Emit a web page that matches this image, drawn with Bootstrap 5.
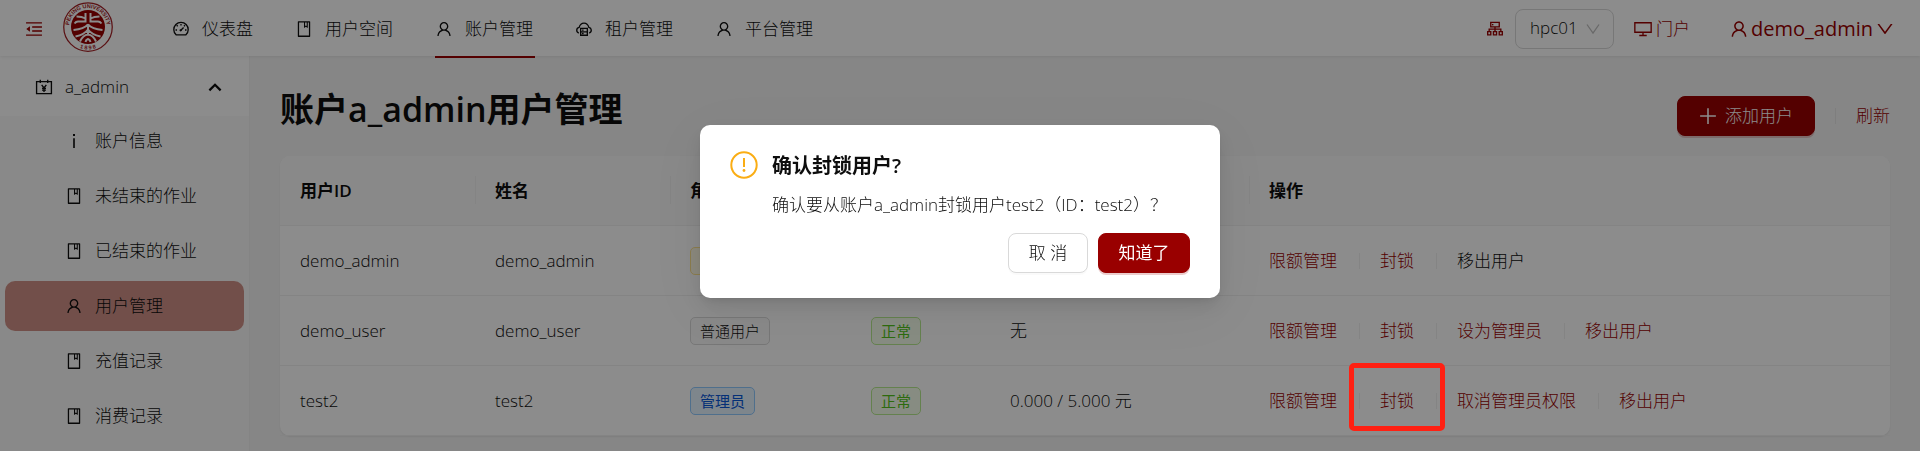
<!DOCTYPE html>
<html lang="zh-CN">
<head>
<meta charset="utf-8">
<meta name="viewport" content="width=device-width, initial-scale=1">
<title>用户管理</title>
<link href="https://cdn.jsdelivr.net/npm/bootstrap@5.3.0/dist/css/bootstrap.min.css" rel="stylesheet">
<style>
  :root { --brand: #990000; --ink: #0d0d0d; --line: #f0f0f0; }
  body { font-family: "Open Sans", "Noto Sans CJK SC", sans-serif; font-size: 17px; font-weight: 300; line-height: 28px; color: var(--ink); background: #f5f5f5; overflow: hidden; }
  a { color: var(--brand); text-decoration: none; }
  .ico { width: 18px; height: 18px; fill: currentColor; flex: none; }
  .ln { fill: none; stroke: currentColor; stroke-width: 76; }
  .topbar { height: 56px; padding-top: 1px; background: #fff; box-shadow: 0 1px 3px rgba(0,0,0,.08); position: relative; }
  .topmenu { gap: 40px; margin-left: 59px; }
  .topmenu a { color: var(--ink); gap: 12px; padding: 0 2px 0 0; height: 57px; border-bottom: 2px solid transparent; }
  .topmenu a.active { border-color: var(--brand); }
  .topmenu li { height: 55px; }
  .brandmark { width: 50px; height: 50px; margin: 0 0 4px 20px; }
  .fold { color: var(--brand); padding: 0; border: 0; background: none; line-height: 1; margin-left: 25px; }
  .cluster-select { width: 99px; height: 40px; border: 1px solid #d9d9d9; border-radius: 8px; padding: 0 0 2px 14px; font-size: 17px; font-weight: 300; color: var(--ink); margin: 0 20px 0 11px;
    background: #fff url("data:image/svg+xml,%3Csvg xmlns='http://www.w3.org/2000/svg' viewBox='0 0 16 16'%3E%3Cpath d='M2 3.5 8 12 14 3.5' fill='none' stroke='%23bfbfbf' stroke-width='1.3'/%3E%3C/svg%3E") no-repeat right 12px center / 16px 16px; appearance: none; }
  .account { font-size: 20px; font-weight: 400; gap: 2px; margin: 0 25px 0 39px; }
  .account .ico { width: 20px; height: 20px; }
  .sidebar { width: 250px; flex: none; background: #fafafa; border-right: 1px solid #f0f0f0; }
  .side-head { height: 60px; width: 100%; background: #fff; border: 0; color: var(--ink); font-weight: 300; padding: 1px 25px 0 35px; }
  .side-list { gap: 5px; margin: 0 5px; }
  .side-list a { height: 50px; color: var(--ink); border-radius: 10px; padding: 0 0 0 60px; gap: 12px; }
  .side-list a.active { background: #d09187; }
  .page { padding: 32px 30px 16px; min-width: 0; }
  h1 { font-size: 34px; line-height: 42px; font-weight: 600; }
  .btn { --bs-btn-font-size: 17px; --bs-btn-font-weight: 300; --bs-btn-border-radius: 8px; height: 40px; padding: 0; line-height: 28px; }
  .btn-brand { background: var(--brand); border-color: var(--brand); color: #fff; box-shadow: 0 2px 0 rgba(153,0,0,.2); }
  .btn-brand:hover { background: #b30000; color: #fff; }
  .btn-plain { background: #fff; border-color: #d9d9d9; color: var(--ink); box-shadow: 0 2px 0 rgba(0,0,0,.02); }
  .btn-cancel { width: 80px; }
  .btn-ok { width: 92px; font-weight: 400; }
  .btn-add { width: 138px; }
  .rule { width: 1px; height: 16px; background: rgba(0,0,0,.06); }
  .panel { background: #fff; border-radius: 10px; box-shadow: 0 1px 2px rgba(0,0,0,.08); margin-top: 20px; }
  .users { table-layout: fixed; --bs-table-bg: transparent; --bs-table-color: var(--ink); }
  .users th, .users td { border-color: var(--line); height: 70px; padding: 1px 20px 0; vertical-align: middle; white-space: nowrap; }
  .users th { height: 69px; font-weight: 600; background: #fafafa; }
  .users th + th { background: #fafafa linear-gradient(var(--line), var(--line)) no-repeat left center / 1px 28px; }
  .users th:first-child { border-top-left-radius: 10px; }
  .users th:last-child { border-top-right-radius: 10px; }
  .tag { display: inline-block; font-size: 15px; line-height: 26px; padding: 0 9px; border: 1px solid #d9d9d9; border-radius: 5px; background: #fafafa; vertical-align: middle; }
  .tag-gold { color: #d48806; background: #fffbe6; border-color: #ffe58f; }
  .tag-blue { color: #0958d9; background: #e6f4ff; border-color: #91caff; }
  .tag-green { color: #52c41a; background: #f6ffed; border-color: #b7eb8f; }
  .tag-blue, .tag-green { font-weight: 400; }
  .acts { gap: 20px; }
  td .acts a { margin-right: 2px; }
  .spot { position: absolute; inset: -24px -31px -16px; border: 5px solid #ff2012; border-radius: 5px; z-index: 1080; pointer-events: none; }
  .mask { background: rgba(0,0,0,.45); }
  .mask .modal-dialog { max-width: 520px; margin: 125px auto 0; }
  .mask .modal-content { border: 0; border-radius: 10px; padding: 26px 30px 25px; color: var(--ink); box-shadow: 0 8px 20px rgba(0,0,0,.1), 0 4px 8px -4px rgba(0,0,0,.12), 0 12px 60px 10px rgba(0,0,0,.05); }
  .mask h2 { font-size: 20px; line-height: 30px; font-weight: 600; margin: 0 0 10px; }
  .confirm-buttons { gap: 10px; margin-top: 14px; }
  .warn { width: 28px; height: 28px; color: #faad14; flex: none; margin-right: 14px; }
</style>
</head>
<body>
<svg class="d-none" aria-hidden="true">
  <symbol id="i-user" viewBox="0 0 1024 1024"><path d="M858.5 763.6a374 374 0 0 0-80.6-119.5 375.63 375.63 0 0 0-119.5-80.6c-.4-.2-.8-.3-1.2-.5C719.5 518 760 444.7 760 362c0-137-111-248-248-248S264 225 264 362c0 82.7 40.5 156 102.8 201.1-.4.2-.8.3-1.2.5-44.8 18.9-85 46-119.5 80.6a375.63 375.63 0 0 0-80.6 119.5A371.7 371.7 0 0 0 136 901.8a8 8 0 0 0 8 8.2h60c4.4 0 7.9-3.5 8-7.8 2-77.2 33-149.5 87.8-204.3 56.7-56.7 132-87.9 212.2-87.9s155.5 31.2 212.2 87.9C779 752.7 810 825 812 902.2c.1 4.4 3.6 7.8 8 7.8h60a8 8 0 0 0 8-8.2c-1-47.8-10.9-94.3-29.5-138.2zM512 534c-45.9 0-89.1-17.9-121.6-50.4S340 407.9 340 362c0-45.9 17.9-89.1 50.4-121.6S466.1 190 512 190s89.1 17.9 121.6 50.4S684 316.1 684 362c0 45.9-17.9 89.1-50.4 121.6S557.9 534 512 534z"/></symbol>
  <symbol id="i-book" viewBox="0 0 1024 1024"><path d="M832 64H192c-17.700 0-32 14.300-32 32v832c0 17.700 14.300 32 32 32h640c17.700 0 32-14.300 32-32V96c0-17.700-14.300-32-32-32zm-260 72h96v209.900L621.500 312 572 347.400V136zm220 752H232V136h280v296.900c0 3.300 1 6.600 3 9.300a15.900 15.900 0 0 0 22.300 3.700l83.800-59.900 81.400 59.400c2.700 2 6 3.100 9.400 3.100 8.800 0 16-7.200 16-16V136h64v752z"/></symbol>
  <symbol id="i-down" viewBox="0 0 1024 1024"><path d="M884 256h-75c-5.100 0-9.900 2.500-12.900 6.600L512 654.200 227.900 262.600c-3-4.100-7.800-6.600-12.900-6.600h-75c-6.500 0-10.300 7.400-6.500 12.700l352.600 486.100c12.800 17.600 39 17.600 51.700 0l352.600-486.100c3.900-5.300.1-12.700-6.400-12.700z"/></symbol>
  <symbol id="i-dash" viewBox="0 0 1024 1024"><path class="ln" d="M232 844A410 410 0 1 1 792 844Z" stroke-linejoin="round"/><path class="ln" d="M490 600 660 430"/><circle cx="492" cy="588" r="66"/><path class="ln" d="M512 225v85M265 300l60 60M740 300l-60 60M200 570h85M739 570h85"/></symbol>
  <symbol id="i-cloud" viewBox="0 0 1024 1024"><path class="ln" d="M215 740A165 165 0 0 1 235 420C285 250 390 180 512 180S739 250 789 420a165 165 0 0 1 20 320"/><path class="ln" d="M322 478h380v390H322ZM322 672h380"/><path class="ln" d="M400 575h90M400 770h90"/></symbol>
  <symbol id="i-fold" viewBox="0 0 1024 1024"><path d="M60 130h904v76H60ZM408 362h556v76H408ZM408 586h556v76H408ZM60 818h904v76H60ZM72 512 280 350v324Z"/></symbol>
  <symbol id="i-org" viewBox="0 0 1024 1024"><path class="ln" d="M270 138h484v250H270ZM512 388v240M180 640V520h664v120M96 660h176v190H96ZM424 660h176v190H424ZM752 660h176v190H752Z"/><path d="M340 225h80v80h-80z"/></symbol>
  <symbol id="i-screen" viewBox="0 0 1024 1024"><path class="ln" d="M48 158h928v540H48ZM512 698v170M300 880h424"/></symbol>
  <symbol id="i-bill" viewBox="0 0 1024 1024"><path class="ln" d="M90 210h844v680H90ZM300 100v190M724 100v190M380 390 512 570 644 390M512 560v230M400 590h224M400 690h224"/></symbol>
  <symbol id="i-info" viewBox="0 0 1024 1024"><path d="M466 350h92v560h-92ZM456 114h112v112H456Z"/></symbol>
  <symbol id="i-up" viewBox="0 0 16 16"><path d="M3 11 8 6l5 5" fill="none" stroke="currentColor" stroke-width="2"/></symbol>
  <symbol id="i-plus" viewBox="0 0 16 16"><path d="M8 1v14M1 8h14" fill="none" stroke="currentColor" stroke-width="1.400"/></symbol>
</svg>

<header class="topbar d-flex align-items-center">
  <button class="fold" type="button" aria-label="收起菜单"><svg class="ico"><use href="#i-fold"/></svg></button>
  <svg class="brandmark" viewBox="0 0 100 100" role="img" aria-label="Peking University">
    <defs><path id="arcTop" d="M16 67A38 38 0 1 1 84 67"/><path id="arcLow" d="M20 84A46 46 0 0 0 80 84"/></defs>
    <circle cx="50" cy="50" r="48.500" fill="#fff" stroke="#a52025" stroke-width="2.500"/>
    <circle cx="50" cy="50" r="34" fill="#990000"/>
    <g font-family="Liberation Sans" font-weight="700" font-size="11" fill="#a52025" text-anchor="middle">
      <text><textPath href="#arcTop" startOffset="50%">PEKING UNIVERSITY</textPath></text>
      <text><textPath href="#arcLow" startOffset="50%">1 8 9 8</textPath></text>
    </g>
    <g fill="none" stroke="#fff" stroke-width="4">
      <path d="M45 22V39H30Q26 39 23 43M27 29Q38 29 45 33M55 22V39H70Q74 39 77 43M73 29Q62 29 55 33"/>
      <path d="M50 44V66M50 45Q42 54 21 56M50 45Q58 54 79 56M50 55Q43 65 25 69M50 55Q57 65 75 69M34 79Q40 66 50 65Q60 66 66 79M45 80Q46 75 50 74Q54 75 55 80"/>
    </g>
  </svg>
  <nav aria-label="主导航">
    <ul class="topmenu list-unstyled d-flex mb-0">
      <li><a class="d-flex align-items-center" href="#"><svg class="ico"><use href="#i-dash"/></svg>仪表盘</a></li>
      <li><a class="d-flex align-items-center" href="#"><svg class="ico"><use href="#i-book"/></svg>用户空间</a></li>
      <li><a class="d-flex align-items-center active" href="#" aria-current="page"><svg class="ico"><use href="#i-user"/></svg>账户管理</a></li>
      <li><a class="d-flex align-items-center" href="#"><svg class="ico"><use href="#i-cloud"/></svg>租户管理</a></li>
      <li><a class="d-flex align-items-center" href="#"><svg class="ico"><use href="#i-user"/></svg>平台管理</a></li>
    </ul>
  </nav>
  <div class="ms-auto d-flex align-items-center">
    <a href="#" class="d-flex" aria-label="集群"><svg class="ico"><use href="#i-org"/></svg></a>
    <select class="cluster-select" aria-label="选择集群"><option>hpc01</option></select>
    <a href="#" class="d-flex align-items-center"><svg class="ico me-1"><use href="#i-screen"/></svg>门户</a>
    <a href="#" class="account d-flex align-items-center"><svg class="ico"><use href="#i-user"/></svg>demo_admin<svg class="ico"><use href="#i-down"/></svg></a>
  </div>
</header>

<div class="d-flex align-items-stretch">
  <aside class="sidebar">
    <button class="side-head d-flex align-items-center" type="button" aria-expanded="true"><svg class="ico me-2"><use href="#i-bill"/></svg><span class="ms-1">a_admin</span><svg class="ico ms-auto"><use href="#i-up"/></svg></button>
    <nav class="side-list d-flex flex-column" aria-label="账户菜单">
      <a class="d-flex align-items-center" href="#"><svg class="ico"><use href="#i-info"/></svg>账户信息</a>
      <a class="d-flex align-items-center" href="#"><svg class="ico"><use href="#i-book"/></svg>未结束的作业</a>
      <a class="d-flex align-items-center" href="#"><svg class="ico"><use href="#i-book"/></svg>已结束的作业</a>
      <a class="d-flex align-items-center active" href="#"><svg class="ico"><use href="#i-user"/></svg>用户管理</a>
      <a class="d-flex align-items-center" href="#"><svg class="ico"><use href="#i-book"/></svg>充值记录</a>
      <a class="d-flex align-items-center" href="#"><svg class="ico"><use href="#i-book"/></svg>消费记录</a>
    </nav>
  </aside>

  <main class="page flex-grow-1">
    <div class="d-flex justify-content-between align-items-start">
      <h1 class="mb-0">账户a_admin用户管理</h1>
      <div class="d-flex align-items-center mt-2 acts">
        <button type="button" class="btn btn-brand btn-add d-flex align-items-center justify-content-center"><svg class="ico me-2"><use href="#i-plus"/></svg><span>添加用户</span></button>
        <span class="rule"></span>
        <a href="#">刷新</a>
      </div>
    </div>
    <div class="panel">
      <table class="table users mb-0">
        <colgroup><col style="width:195px"><col style="width:195px"><col style="width:181px"><col style="width:139px"><col style="width:259px"><col></colgroup>
        <thead><tr><th>用户ID</th><th>姓名</th><th>角色</th><th>状态</th><th>已用额度/限额</th><th>操作</th></tr></thead>
        <tbody>
          <tr><td>demo_admin</td><td>demo_admin</td><td><span class="tag tag-gold">拥有者</span></td><td><span class="tag tag-green">正常</span></td><td>无</td>
            <td><div class="acts d-flex align-items-center"><a href="#">限额管理</a><span class="rule"></span><a href="#">封锁</a><span class="rule"></span><span>移出用户</span></div></td></tr>
          <tr><td>demo_user</td><td>demo_user</td><td><span class="tag">普通用户</span></td><td><span class="tag tag-green">正常</span></td><td>无</td>
            <td><div class="acts d-flex align-items-center"><a href="#">限额管理</a><span class="rule"></span><a href="#">封锁</a><span class="rule"></span><a href="#">设为管理员</a><span class="rule"></span><a href="#">移出用户</a></div></td></tr>
          <tr><td>test2</td><td>test2</td><td><span class="tag tag-blue">管理员</span></td><td><span class="tag tag-green">正常</span></td><td>0.000 / 5.000 元</td>
            <td><div class="acts d-flex align-items-center"><a href="#">限额管理</a><span class="rule"></span><a href="#" class="position-relative">封锁<span class="spot"></span></a><span class="rule"></span><a href="#">取消管理员权限</a><span class="rule"></span><a href="#">移出用户</a></div></td></tr>
        </tbody>
      </table>
    </div>
  </main>
</div>

<div class="modal mask d-block" role="dialog" aria-modal="true" aria-labelledby="confirmTitle">
  <div class="modal-dialog">
    <div class="modal-content">
      <div class="d-flex align-items-start">
        <svg class="warn" viewBox="0 0 28 28"><circle cx="14" cy="14" r="12.700" fill="none" stroke="currentColor" stroke-width="2"/><path d="M13 7h2v9h-2z" fill="currentColor"/><circle cx="14" cy="19.500" r="1.400" fill="currentColor"/></svg>
        <div>
          <h2 id="confirmTitle">确认封锁用户?</h2>
          <div>确认要从账户a_admin封锁用户test2（ID：test2）？</div>
        </div>
      </div>
      <div class="confirm-buttons d-flex justify-content-end">
        <button type="button" class="btn btn-plain btn-cancel">取 消</button>
        <button type="button" class="btn btn-brand btn-ok">知道了</button>
      </div>
    </div>
  </div>
</div>
<script src="https://cdn.jsdelivr.net/npm/bootstrap@5.3.0/dist/js/bootstrap.bundle.min.js"></script>
</body>
</html>
